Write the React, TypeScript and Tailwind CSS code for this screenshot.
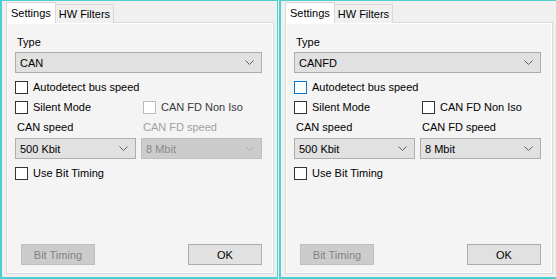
import React from "react";

const font = { fontFamily: '"Liberation Sans", Arial, sans-serif' };

function Chevron({ disabled }: { disabled?: boolean }) {
  return (
    <svg width="9" height="5" viewBox="0 0 9 5" className="shrink-0">
      <path d="M0.5 0.5 L4.5 4.5 L8.5 0.5" fill="none" stroke={disabled ? "#a8a8a8" : "#606060"} strokeWidth="1" />
    </svg>
  );
}

function Combo({ text, w, disabled }: { text: string; w: string; disabled?: boolean }) {
  return (
    <div
      className={`${w} h-[21px] flex items-center justify-between pl-[4px] pr-[7px] border ${
        disabled ? "bg-[#cccccc] border-[#bfbfbf] text-[#8a8a8a]" : "bg-[#e1e1e1] border-[#adadad] text-black"
      }`}
    >
      <span>{text}</span>
      <Chevron disabled={disabled} />
    </div>
  );
}

function Check({ label, disabled, hot, w }: { label: string; disabled?: boolean; hot?: boolean; w?: string }) {
  return (
    <div className={`flex items-center h-[16px] ${w ?? ""}`}>
      <div
        className={`w-[13px] h-[13px] bg-white border ${
          hot ? "border-[#0078d7]" : disabled ? "border-[#bcbcbc]" : "border-[#333333]"
        }`}
      />
      <span className={`ml-[5px] ${disabled ? "text-[#3a3a3a]" : "text-black"}`}>{label}</span>
    </div>
  );
}

function Panel({ fd }: { fd: boolean }) {
  return (
    <div className="shrink-0 w-[278px] h-[279px] bg-[#f0f0f0] border-l-2 border-t border-r border-b-2 border-[#4dd0d0] flex flex-col text-[11px] leading-[14px]" style={font}>
      <div className="ml-[4px] mt-[1px] flex items-end h-[21px] relative z-10">
        <div className="h-[21px] px-[4px] bg-white border border-b-0 border-[#d9d9d9] flex items-center">Settings</div>
        <div className="h-[19px] px-[3px] bg-[#f0f0f0] border border-b-0 border-l-0 border-[#d9d9d9] flex items-center">HW Filters</div>
      </div>
      <div className="ml-[4px] w-[268px] h-[252px] border border-[#d9d9d9] bg-[#ffffff] -mt-px p-[1px]">
        <div className="w-full h-full bg-[#f4f4f4] flex flex-col pl-[7px] pt-[11px] pb-[7px]">
          <div className="pl-[2px]">Type</div>
          <div className="mt-[3px]">
            <Combo text={fd ? "CANFD" : "CAN"} w="w-[247px]" />
          </div>
          <div className="mt-[6px]">
            <Check label="Autodetect bus speed" hot={fd} />
          </div>
          <div className="mt-[4px] flex">
            <Check label="Silent Mode" w="w-[128px]" />
            <Check label="CAN FD Non Iso" disabled={!fd} />
          </div>
          <div className="mt-[5px] flex">
            <div className="w-[126px] pl-[2px]">CAN speed</div>
            <div className={`pl-[2px] ${fd ? "text-black" : "text-[#a0a0a0]"}`}>CAN FD speed</div>
          </div>
          <div className="mt-[4px] flex gap-[5px]">
            <Combo text="500 Kbit" w="w-[121px]" />
            <Combo text="8 Mbit" w="w-[121px]" disabled={!fd} />
          </div>
          <div className="mt-[6px]">
            <Check label="Use Bit Timing" />
          </div>
          <div className="mt-auto flex justify-between w-[247px] pl-[6px]">
            <div className="w-[74px] h-[21px] bg-[#cccccc] border border-[#bfbfbf] text-[#838383] flex items-center justify-center">Bit Timing</div>
            <div className="w-[74px] h-[21px] bg-[#e1e1e1] border border-[#adadad] text-black flex items-center justify-center">OK</div>
          </div>
        </div>
      </div>
    </div>
  );
}

export default function App() {
  return (
    <div className="w-[556px] h-[279px] bg-[#f0f0f0] flex overflow-hidden">
      <Panel fd={false} />
      <div className="ml-px shrink-0">
        <Panel fd={true} />
      </div>
    </div>
  );
}
